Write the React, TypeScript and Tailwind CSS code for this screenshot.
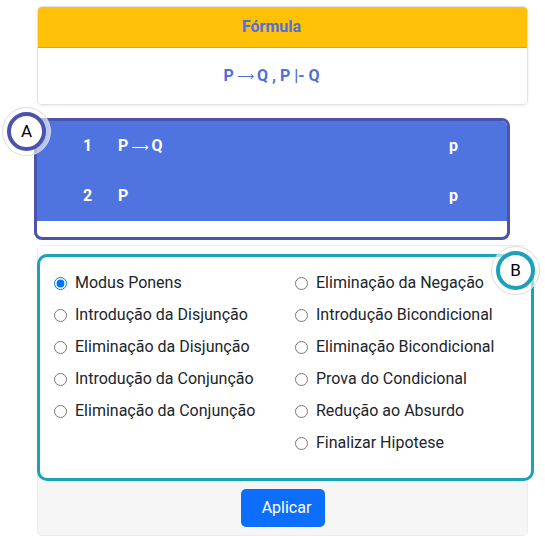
import React from "react";

const left = [
  "Modus Ponens",
  "Introdução da Disjunção",
  "Eliminação da Disjunção",
  "Introdução da Conjunção",
  "Eliminação da Conjunção",
];
const right = [
  "Eliminação da Negação",
  "Introdução Bicondicional",
  "Eliminação Bicondicional",
  "Prova do Condicional",
  "Redução ao Absurdo",
  "Finalizar Hipotese",
];

function Radio({ label, checked }: { label: string; checked?: boolean }) {
  return (
    <label className="flex items-center h-[32px] gap-[8px] text-[16px] text-[#212529]">
      <input type="radio" name="rule" defaultChecked={checked} className="w-[13px] h-[13px] m-0" />
      <span>{label}</span>
    </label>
  );
}

function Arrow() {
  return (
    <span className="font-normal text-[12px] mx-[3px]" style={{ fontFamily: "'DejaVu Sans', sans-serif" }}>
      ⟶
    </span>
  );
}

export default function App() {
  return (
    <div className="relative w-[545px] h-[536px] bg-white overflow-hidden" style={{ fontFamily: "Roboto, 'Liberation Sans', sans-serif" }}>
      {/* Formula card */}
      <div className="mt-[6px] ml-[37px] w-[491px] rounded-[5px] border border-[#e3e3e3] shadow-[0_1px_3px_rgba(0,0,0,0.08)] overflow-hidden">
        <div className="h-[41px] bg-[#ffc107] border-b border-[#e0a800] flex items-center justify-center pr-[22px] font-bold text-[16px] text-[#4f6fdc]">
          Fórmula
        </div>
        <div className="h-[56px] bg-white flex items-center justify-center pr-[22px] font-bold text-[16px] text-[#4f6fdc]">
          P<Arrow />Q , P |- Q
        </div>
      </div>

      {/* Proof box A */}
      <div className="mt-[13px] ml-[34px] w-[476px] h-[122px] border-[3px] border-[#4b53ad] rounded-[8px] overflow-hidden bg-white">
        <div className="bg-[#5074df] text-white font-bold text-[16px]">
          <div className="h-[50px] flex items-center">
            <span className="w-[81px] pl-[46px]">1</span>
            <span className="w-[331px]">P<Arrow />Q</span>
            <span>p</span>
          </div>
          <div className="h-[50px] flex items-center">
            <span className="w-[81px] pl-[46px]">2</span>
            <span className="w-[331px]">P</span>
            <span>p</span>
          </div>
        </div>
      </div>

      {/* Rules card */}
      <div className="mt-[5px] ml-[37px] w-[491px] h-[291px] rounded-[5px] border border-[#ececec] bg-[#f6f6f6] flex flex-col">
        <div className="h-[8px] bg-white" />
        <div className="-ml-[1px] w-[497px] h-[227px] border-[3px] border-[#1ba2ba] rounded-[10px] bg-white pt-[10px] pl-[14px] flex">
          <div className="w-[241px] flex flex-col">
            {left.map((l, i) => (
              <Radio key={l} label={l} checked={i === 0} />
            ))}
          </div>
          <div className="flex flex-col">
            {right.map((l) => (
              <Radio key={l} label={l} />
            ))}
          </div>
        </div>
        <div className="flex justify-center pt-[8px]">
          <button className="w-[84px] h-[38px] pl-[8px] rounded-[5px] bg-[#0d6efd] text-white text-[16px]">Aplicar</button>
        </div>
      </div>

      {/* Annotation A */}
      <div className="absolute left-[2px] top-[107px] w-[49px] h-[49px] rounded-full border border-[#dcdcdc] bg-white/60 flex items-center justify-center">
        <div className="w-[39px] h-[39px] rounded-full border-[4px] border-[#4b53ad] bg-white flex items-center justify-center text-[17px] text-black">
          A
        </div>
      </div>

      {/* Annotation B */}
      <div className="absolute left-[491px] top-[246px] w-[49px] h-[49px] rounded-full border border-[#dcdcdc] bg-white/60 flex items-center justify-center">
        <div className="w-[39px] h-[39px] rounded-full border-[4px] border-[#1ba2ba] bg-white flex items-center justify-center text-[17px] text-black">
          B
        </div>
      </div>
    </div>
  );
}
